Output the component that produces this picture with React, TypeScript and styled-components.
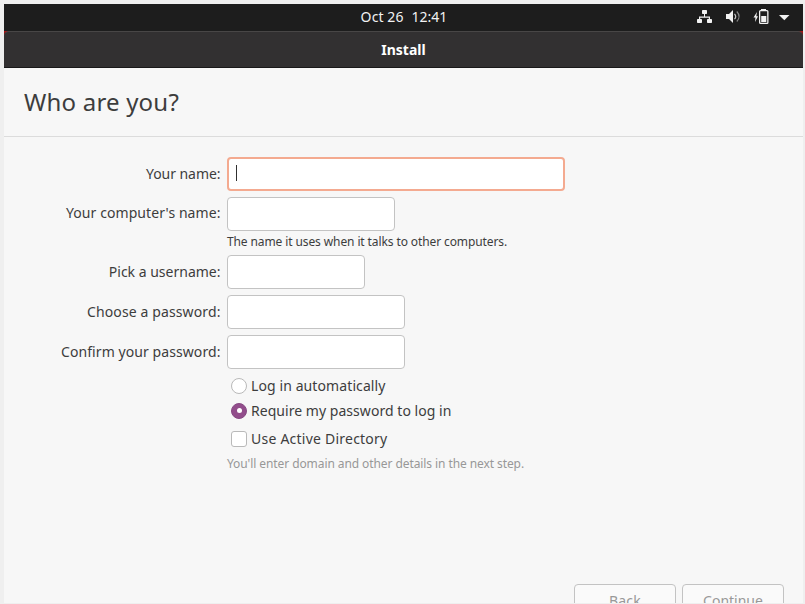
import React from 'react';
import styled, { createGlobalStyle } from 'styled-components';

const GlobalStyle = createGlobalStyle`
  * { box-sizing: border-box; }
  body {
    margin: 0;
    overflow: hidden;
    background: #efefef;
    font-family: "Noto Sans", "Open Sans", sans-serif;
    font-size: 14px;
    color: #3d3d3d;
  }
`;

const Screen = styled.div`
  display: flex;
  flex-direction: column;
  height: 604px;
  padding: 4px 2px 1px 4px;
`;

const TopBar = styled.header`
  display: grid;
  grid-template-columns: 1fr auto 1fr;
  align-items: start;
  flex: none;
  height: 27px;
  background: #1d1d1d;
  color: #f2f2f2;
`;

const Clock = styled.div`
  grid-column: 2;
  display: flex;
  gap: 8px;
  line-height: 25px;
  padding-left: 1px;
`;

const Spaced = styled.span<{ $ls?: number }>`
  letter-spacing: ${p => p.$ls ?? 0}px;
`;

const Tray = styled.div`
  display: flex;
  justify-content: flex-end;
  padding: 5px 13px 0 0;
  svg { display: block; }
`;

const TitleFrame = styled.div`
  flex: none;
  height: 37px;
  background: linear-gradient(#b01818, #5a1012 5px, #1d1d1d 8px);
`;

const TitleBar = styled.div`
  height: 37px;
  border-top: 1px solid #484646;
  border-bottom: 1px solid #191819;
  border-radius: 5px 5px 0 0;
  background: #323031;
  color: #fff;
  font-weight: 700;
  text-align: center;
  line-height: 35px;
`;

const Body = styled.main`
  flex: 1;
  min-height: 0;
  display: flex;
  flex-direction: column;
  overflow: hidden;
  background: #f7f7f7;
`;

const Heading = styled.h1`
  flex: none;
  margin: 0;
  height: 69px;
  padding-left: 20px;
  border-bottom: 1px solid #dcdcdc;
  font-size: 24px;
  font-weight: 400;
  line-height: 68px;
  letter-spacing: 0.2px;
`;

const Form = styled.form`
  flex: none;
  display: grid;
  grid-template-columns: 216.5px 1fr;
  column-gap: 6.5px;
  grid-template-rows: 34px 34px 12px 34px 34px 34px;
  row-gap: 6px;
  padding-top: 20px;
`;

const Label = styled.label<{ $ls?: number; $raised?: boolean }>`
  text-align: right;
  line-height: ${p => (p.$raised ? 32 : 34)}px;
  white-space: nowrap;
  letter-spacing: ${p => p.$ls ?? 0}px;
`;

const Field = styled.div<{ $width: number; $focused?: boolean }>`
  display: flex;
  align-items: center;
  width: ${p => p.$width}px;
  height: 34px;
  padding-left: ${p => (p.$focused ? 7 : 8)}px;
  border: ${p => (p.$focused ? '2px solid #f4aa90' : '1px solid #c3c3c3')};
  border-radius: 4px;
  background: #fff;
`;

const Caret = styled.span`
  width: 1px;
  height: 16px;
  margin-top: -2px;
  background: #303030;
`;

const Hint = styled.div<{ $muted?: boolean }>`
  font-size: 12px;
  white-space: nowrap;
  letter-spacing: ${p => (p.$muted ? -0.085 : -0.107)}px;
  line-height: 16px;
  color: ${p => (p.$muted ? '#989898' : '#3d3d3d')};
`;

const FieldHint = styled(Hint)`
  grid-column: 2;
  margin-top: -3px;
`;

const OptionHint = styled(Hint)`
  margin-top: 2px;
`;

const Options = styled.div`
  flex: none;
  display: flex;
  flex-direction: column;
  padding: 4px 0 0 223px;
`;

const Option = styled.div<{ $height: number; $ls: number }>`
  display: flex;
  align-items: center;
  gap: 4px;
  height: ${p => p.$height}px;
  padding-left: 4px;
  letter-spacing: ${p => p.$ls}px;
`;

const Mark = styled.span<{ $kind: 'radio' | 'check'; $on?: boolean }>`
  display: flex;
  align-items: center;
  justify-content: center;
  width: 16px;
  height: 16px;
  border: 1px solid ${p => (p.$on ? '#874983' : '#b9b9b9')};
  border-radius: ${p => (p.$kind === 'radio' ? '50%' : '3px')};
  background: ${p => (p.$on ? '#924d8b' : '#fff')};
`;

const Dot = styled.span`
  width: 5px;
  height: 5px;
  border-radius: 50%;
  background: #fff;
`;

const Footer = styled.footer`
  display: flex;
  justify-content: flex-end;
  gap: 6px;
  flex: none;
  height: 19px;
  margin-top: auto;
  padding-right: 19px;
`;

const Button = styled.button<{ $ls?: number }>`
  width: 102px;
  height: 34px;
  padding: 0;
  border: 1px solid #c3c3c3;
  border-radius: 4px;
  background: #fafafa;
  color: #989898;
  font: inherit;
  line-height: 32px;
  letter-spacing: ${p => p.$ls ?? 0}px;
`;

const TrayIcons = () => (
  <svg width="94" height="16" viewBox="0 0 94 16" fill="#f2f2f2">
    <rect x="6" y="1" width="5" height="4" rx="0.7" />
    <path d="M8 5h1v2.500h5V10.500h-1.200V8.800H4.200V10.500H3V7.500h5z" />
    <rect x="1" y="10" width="5" height="4" rx="0.7" />
    <rect x="11" y="10" width="5" height="4" rx="0.7" />
    <path d="M30 5h3l4-4v13l-4-4h-3z" />
    <path d="M38.500 4.800q2.400 2.700 0 5.400" fill="none" stroke="#c8c8c8" strokeWidth="1.200" />
    <path d="M40.800 2.500q4.600 5 0 10" fill="none" stroke="#858585" strokeWidth="1.200" />
    <path d="M61 3L57.500 8.500h2L59 13 62 7.300H60.300z" />
    <path d="M65 0h5v1h1q1.500 0 1.500 1.500v11q0 1.500-1.500 1.500h-6.500q-1.500 0-1.500-1.500v-11Q63 1 64.500 1H65zM64.300 2.300v11.400h6.900V2.300z" fillRule="evenodd" />
    <rect x="65.200" y="7" width="5.100" height="6" />
    <path d="M83 6h10.500l-5.200 5.300z" />
  </svg>
);

export default function App() {
  return (
    <>
      <GlobalStyle />
      <Screen>
        <TopBar>
          <Clock>
            <Spaced $ls={0.1}>Oct 26</Spaced>
            <Spaced>12:41</Spaced>
          </Clock>
          <Tray>
            <TrayIcons />
          </Tray>
        </TopBar>
        <TitleFrame>
          <TitleBar>Install</TitleBar>
        </TitleFrame>
        <Body>
          <Heading>Who are you?</Heading>
          <Form>
            <Label $ls={-0.05}>Your name:</Label>
            <Field $width={338} $focused>
              <Caret />
            </Field>
            <Label $ls={0.075} $raised>Your computer's name:</Label>
            <Field $width={168} />
            <FieldHint>The name it uses when it talks to other computers.</FieldHint>
            <Label>Pick a username:</Label>
            <Field $width={138} />
            <Label $ls={0.117}>Choose a password:</Label>
            <Field $width={178} />
            <Label $ls={0.077}>Confirm your password:</Label>
            <Field $width={178} />
          </Form>
          <Options>
            <Option $height={25} $ls={0.1}>
              <Mark $kind="radio" />
              Log in automatically
            </Option>
            <Option $height={25} $ls={0.04}>
              <Mark $kind="radio" $on>
                <Dot />
              </Mark>
              Require my password to log in
            </Option>
            <Option $height={31} $ls={0.23}>
              <Mark $kind="check" />
              Use Active Directory
            </Option>
            <OptionHint $muted>You'll enter domain and other details in the next step.</OptionHint>
          </Options>
          <Footer>
            <Button $ls={0.2}>Back</Button>
            <Button>Continue</Button>
          </Footer>
        </Body>
      </Screen>
    </>
  );
}
